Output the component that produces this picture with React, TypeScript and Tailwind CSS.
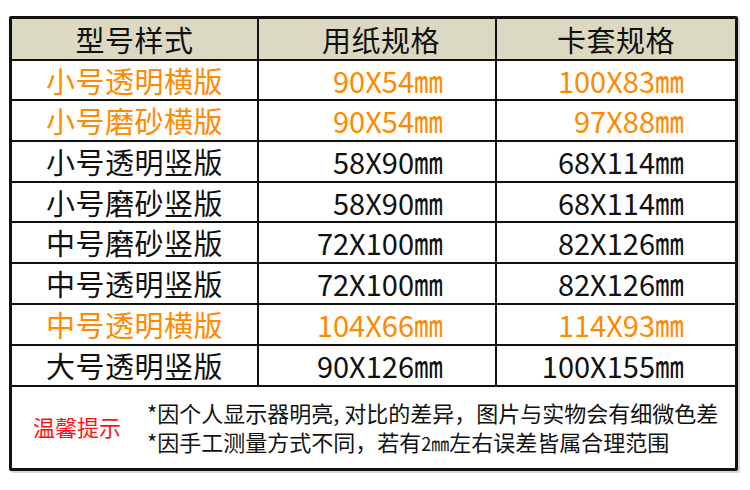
import React from "react";

type Row = { name: string; paper: string; sleeve: string; orange?: boolean; h: number };

const rows: Row[] = [
  { name: "小号透明横版", paper: "90X54㎜", sleeve: "100X83㎜", orange: true, h: 38 },
  { name: "小号磨砂横版", paper: "90X54㎜", sleeve: "97X88㎜", orange: true, h: 39 },
  { name: "小号透明竖版", paper: "58X90㎜", sleeve: "68X114㎜", h: 39 },
  { name: "小号磨砂竖版", paper: "58X90㎜", sleeve: "68X114㎜", h: 38 },
  { name: "中号磨砂竖版", paper: "72X100㎜", sleeve: "82X126㎜", h: 39 },
  { name: "中号透明竖版", paper: "72X100㎜", sleeve: "82X126㎜", h: 39 },
  { name: "中号透明横版", paper: "104X66㎜", sleeve: "114X93㎜", orange: true, h: 39 },
  { name: "大号透明竖版", paper: "90X126㎜", sleeve: "100X155㎜", h: 39 },
];

export default function App() {
  return (
    <div
      className="w-[750px] h-[490px] bg-white pt-[16px] pl-[9px]"
      style={{ fontFamily: '"Noto Sans CJK SC", "Noto Sans", sans-serif' }}
    >
      <div className="w-[729px] h-[455px] border-[3px] border-[#111] rounded-[2px] flex flex-col shadow-[2px_2px_0_#d8d8d8]">
        {/* Header */}
        <div className="flex h-[42px] border-b-2 border-[#111] bg-[#dcd9c2] text-[29px] text-[#111] leading-none">
          <div className="w-[247px] border-r-2 border-[#111] flex items-center justify-center tracking-[0.5px]">型号样式</div>
          <div className="w-[238px] border-r-2 border-[#111] flex items-center justify-center pl-[8px] tracking-[0.5px]">用纸规格</div>
          <div className="flex-1 flex items-center justify-center tracking-[0.5px]">卡套规格</div>
        </div>
        {rows.map((r, i) => (
          <div
            key={i}
            className={`flex border-b-2 border-[#111] text-[29px] leading-none ${
              r.orange ? "text-[#ff8a00]" : "text-[#111]"
            }`}
            style={{ height: r.h + 2 }}
          >
            <div className="w-[247px] border-r-2 border-[#111] flex items-center justify-center tracking-[0.5px]">{r.name}</div>
            <div className="w-[238px] border-r-2 border-[#111] flex items-center justify-end pr-[52px]">{r.paper}</div>
            <div className="flex-1 flex items-center justify-end pr-[51px]">{r.sleeve}</div>
          </div>
        ))}
        {/* Footer */}
        <div className="flex-1 flex items-center pl-[21px]">
          <div className="text-[22px] text-[#ff1010] leading-none w-[114px] -mt-[4px]">温馨提示</div>
          <div className="flex flex-col text-[22px] text-[#111] leading-[29px] pt-[1px]">
            <div>*因个人显示器明亮, 对比的差异，图片与实物会有细微色差</div>
            <div>
              *因手工测量方式不同，若有<span className="text-[18px]">2㎜</span>左右误差皆属合理范围
            </div>
          </div>
        </div>
      </div>
    </div>
  );
}
